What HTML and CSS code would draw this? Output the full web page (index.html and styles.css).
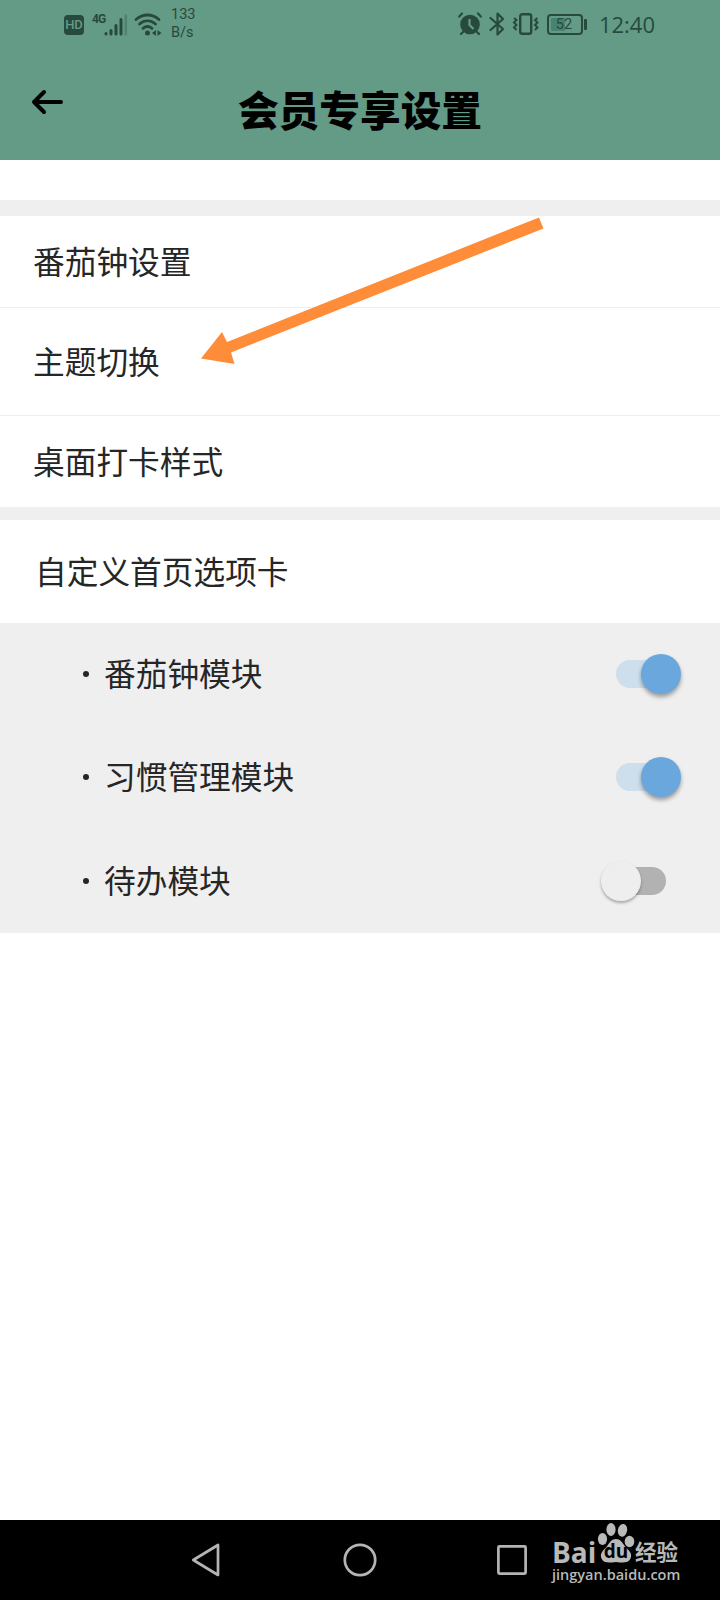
FILE: index.html
```html
<!DOCTYPE html>
<html lang="zh-CN">
<head>
  <meta charset="UTF-8">
  <meta name="viewport" content="width=device-width, initial-scale=1.0">
  <title>会员专享设置</title>
  <link rel="stylesheet" href="styles.css">
</head>
<body>
  <header class="header">
    <div class="status-bar">
      <div class="status-left">
        <span class="hd">HD</span>
        <div class="signal">
          <span class="net">4G</span>
          <svg width="24" height="24" viewBox="0 0 24 24">
            <g stroke="#274a3d" stroke-width="3" stroke-linecap="round">
              <path d="M2 20.500v.5M7 17.500v3.500M12 12.500v8.500M17 6.500v14.500"/>
            </g>
            <path d="M21.800 1.500v21" stroke="#4e8371" stroke-width="2.500"/>
          </svg>
        </div>
        <svg class="wifi" width="28" height="24" viewBox="0 0 28 24">
          <g fill="none" stroke="#274a3d" stroke-width="2.800" stroke-linecap="round">
            <path d="M2 6.500C9 .500 18 .500 25 6.500"/>
            <path d="M5.500 11C10.500 6.800 16.500 6.800 21.500 11"/>
            <path d="M9 15.300c3-2.400 6-2.400 9 0"/>
          </g>
          <circle cx="13.500" cy="20" r="2.500" fill="#274a3d"/>
          <path d="M22 17v6l-4-3zM23.500 17v6l4-3z" fill="#274a3d"/>
        </svg>
        <div class="speed">133<br>B/s</div>
      </div>
      <div class="status-right">
        <svg class="alarm" width="24" height="24" viewBox="0 0 24 24">
          <circle cx="12" cy="12.500" r="9.800" fill="#274a3d"/>
          <g fill="none" stroke="#274a3d" stroke-width="2.200" stroke-linecap="round">
            <path d="M1.200 4.500 4 1.500M22.800 4.500 20 1.500M5 20l-2 2M19 20l2 2"/>
          </g>
          <path d="M11.500 7v6l4 4" fill="none" stroke="#649b87" stroke-width="2.200"/>
        </svg>
        <svg class="bluetooth" width="16" height="26" viewBox="0 0 16 26">
          <path d="M1.500 7 14 18l-5.500 5.500v-21L14 8 1.500 19" fill="none" stroke="#274a3d" stroke-width="2.200" stroke-linejoin="round" stroke-linecap="round"/>
        </svg>
        <svg class="vibrate" width="28" height="24" viewBox="0 0 28 24">
          <rect x="8.200" y="2.200" width="11" height="19.600" rx="2" fill="none" stroke="#274a3d" stroke-width="2.400"/>
          <path d="M2 6l2.500 2L2 10.500 4.500 13 2 15.500 4.500 18M25.500 6 23 8l2.500 2.500L23 13l2.500 2.500L23 18" fill="none" stroke="#274a3d" stroke-width="2"/>
        </svg>
        <div class="battery"><span>52</span></div>
        <span class="clock">12:40</span>
      </div>
    </div>
    <div class="title-bar">
      <svg class="back" width="34" height="26" viewBox="0 0 34 26">
        <path d="M13 3 3 13l10 10M3 13h27" fill="none" stroke="#000" stroke-width="4" stroke-linecap="round" stroke-linejoin="round"/>
      </svg>
      <h1 class="title">会员专享设置</h1>
    </div>
  </header>

  <main class="settings">
    <section class="group">
      <div class="row">番茄钟设置</div>
      <div class="row row-tall">主题切换</div>
      <div class="row row-last">桌面打卡样式</div>
    </section>
    <section class="tabs">
      <div class="tabs-title">自定义首页选项卡</div>
      <div class="modules">
        <div class="module"><i class="dot"></i><span class="name">番茄钟模块</span><div class="switch on"></div></div>
        <div class="module"><i class="dot"></i><span class="name">习惯管理模块</span><div class="switch on"></div></div>
        <div class="module"><i class="dot"></i><span class="name">待办模块</span><div class="switch"></div></div>
      </div>
    </section>
  </main>

  <!-- pointer lying over the list -->
  <svg class="arrow" width="344" height="148" viewBox="0 0 344 148">
    <path d="M339 2.500l4.500 11L31 137.500l3.500 11.500L1 143.500 22 117l5 10z" fill="#ff8c39"/>
  </svg>

  <nav class="nav-bar">
    <svg width="30" height="36" viewBox="0 0 30 36"><path d="M27 3v30L2.300 18z" fill="none" stroke="#b4b4b4" stroke-width="2.700" stroke-linejoin="round"/></svg>
    <svg width="36" height="36" viewBox="0 0 36 36"><circle cx="18" cy="18" r="15.200" fill="none" stroke="#b4b4b4" stroke-width="2.700"/></svg>
    <svg width="32" height="32" viewBox="0 0 32 32"><rect x="2.400" y="2.400" width="27.200" height="27.200" rx="1" fill="none" stroke="#b4b4b4" stroke-width="2.700"/></svg>
    <div class="watermark">
      <div class="brand">
        <span class="bai">Bai</span>
        <span class="paw">
          <svg width="38" height="42" viewBox="0 0 38 42">
            <g fill="#b9b9b9">
              <ellipse cx="5.500" cy="17" rx="4.600" ry="6"/>
              <ellipse cx="14" cy="7.500" rx="4.600" ry="6.400"/>
              <ellipse cx="25.500" cy="8.300" rx="4.600" ry="6.400" transform="rotate(12 25.500 8.300)"/>
              <ellipse cx="32.500" cy="19.500" rx="4.800" ry="5.800"/>
              <path d="M19 17c5 0 7 5 10 8.500 3.500 3.500 6.500 6 4.500 11-2 4.500-7 4.500-14.500 3.500-8 1-12.500 1-14.500-3.500-2-5 1.500-8 5-11.500C12 21.500 14 17 19 17z"/>
            </g>
          </svg>
          <b>du</b>
        </span>
        <span class="jy">经验</span>
      </div>
      <div class="url">jingyan.baidu.com</div>
    </div>
  </nav>
</body>
</html>
```

FILE: styles.css
```css
* {
  box-sizing: border-box;
}

body {
  margin: 0;
  height: 1600px;
  display: flex;
  flex-direction: column;
  position: relative;
  background: #fff;
  color: #262626;
  font-family: "KaiTi", "Noto Sans CJK SC", sans-serif;
  overflow: hidden;
}

svg {
  display: block;
  flex: none;
}

.header {
  height: 160px;
  background: #649b87;
}

/* status bar */
.status-bar {
  height: 50px;
  padding: 0 65px 0 64px;
  display: flex;
  justify-content: space-between;
  color: #274a3d;
  font-family: Roboto, sans-serif;
}

.status-left,
.status-right {
  display: flex;
  align-items: center;
}

.status-right {
  padding-bottom: 2px;
}

.hd {
  width: 20px;
  height: 20px;
  border-radius: 4px;
  background: #274a3d;
  color: #649b87;
  font-size: 13px;
  font-weight: 500;
  line-height: 20px;
  text-align: center;
}

.signal {
  display: flex;
  margin: 0 6px 0 8px;
}

.net {
  width: 12px;
  font: 700 12px/12px Roboto, sans-serif;
  letter-spacing: -1px;
}

.wifi {
  margin-right: 9px;
}

.speed {
  font-size: 14.500px;
  line-height: 18px;
  margin-top: -2px;
}

.alarm,
.bluetooth,
.vibrate {
  margin-right: 7px;
}

.battery {
  position: relative;
  width: 36px;
  height: 21px;
  margin-right: 16px;
  padding: 3px 3px 3px 1px;
  border: 2px solid #274a3d;
  border-radius: 4px;
  font-size: 14.500px;
  line-height: 12px;
  text-align: center;
  background: linear-gradient(#488270, #488270) 2px 2px / 14px 13px no-repeat;
}

.battery::after {
  content: "";
  position: absolute;
  right: -6px;
  top: 3px;
  width: 3px;
  height: 11px;
  border-radius: 1px;
  background: #274a3d;
}

.clock {
  font: 22px "Open Sans", sans-serif;
}

.title-bar {
  position: relative;
  height: 110px;
  padding-left: 31px;
}

.back {
  transform: translateY(39px);
}

.title {
  position: absolute;
  left: 0;
  right: 0;
  top: 29px;
  margin: 0;
  color: #000;
  font-size: 40.700px;
  font-weight: 900;
  line-height: 60px;
  text-align: center;
}

/* settings list */
.settings {
  flex: 1;
  padding-top: 40px;
  font-size: 31.700px;
}

.group {
  border-top: 16px solid #efefef;
  border-bottom: 13px solid #efefef;
}

.row {
  height: 92px;
  padding: 0 0 3px 33px;
  border-bottom: 1px solid #ebeff0;
  display: flex;
  align-items: center;
}

.row-tall {
  height: 108px;
}

.row-last {
  height: 91px;
  border-bottom: none;
}

.tabs-title {
  height: 103px;
  padding: 0 0 3px 35px;
  display: flex;
  align-items: center;
}

.modules {
  height: 310px;
  background: #efefef;
  display: grid;
  grid-template-rows: repeat(3, 1fr);
}

.module {
  display: flex;
  align-items: center;
  padding: 0 39px 1px 83px;
}

.dot {
  width: 6px;
  height: 6px;
  border-radius: 50%;
  background: #262626;
}

.name {
  flex: 1;
  margin-left: 15px;
  padding-bottom: 4px;
}

.switch {
  position: relative;
  width: 50px;
  height: 28px;
  margin-right: 15px;
  border-radius: 14px;
  background: #b2b2b2;
}

.switch::after {
  content: "";
  position: absolute;
  left: -15px;
  top: -6px;
  width: 40px;
  height: 40px;
  border-radius: 50%;
  background: #eee;
  box-shadow: 0 2px 3px rgba(0, 0, 0, 0.3);
}

.switch.on {
  background: #cddfec;
}

.switch.on::after {
  left: 25px;
  background: #6aa7dc;
  box-shadow: 0 3px 4px rgba(0, 0, 0, 0.35);
}

.arrow {
  position: absolute;
  left: 200px;
  top: 215px;
  overflow: visible;
}

/* system navigation */
.nav-bar {
  position: relative;
  height: 80px;
  padding-left: 191px;
  background: #000;
  display: flex;
  align-items: center;
}

.nav-bar > svg + svg {
  margin-left: 121px;
}

.nav-bar > svg:nth-of-type(3) {
  margin-left: 118px;
}

.watermark {
  position: absolute;
  left: 552px;
  top: 2px;
  width: 140px;
  color: #b9b9b9;
}

.brand {
  display: flex;
  align-items: flex-end;
  height: 42px;
}

.bai {
  width: 45px;
  font: 700 28px/24px "Open Sans", sans-serif;
}

.paw {
  position: relative;
  width: 38px;
}

.paw b {
  position: absolute;
  left: 0;
  right: 0;
  bottom: 3px;
  color: #000;
  font: 700 19px/19px "Open Sans", sans-serif;
  text-align: center;
}

.jy {
  font: 700 21.500px/27px "Noto Sans CJK SC", sans-serif;
}

.url {
  margin-top: 1px;
  font: 600 14.500px/20px "Open Sans", sans-serif;
}
```
